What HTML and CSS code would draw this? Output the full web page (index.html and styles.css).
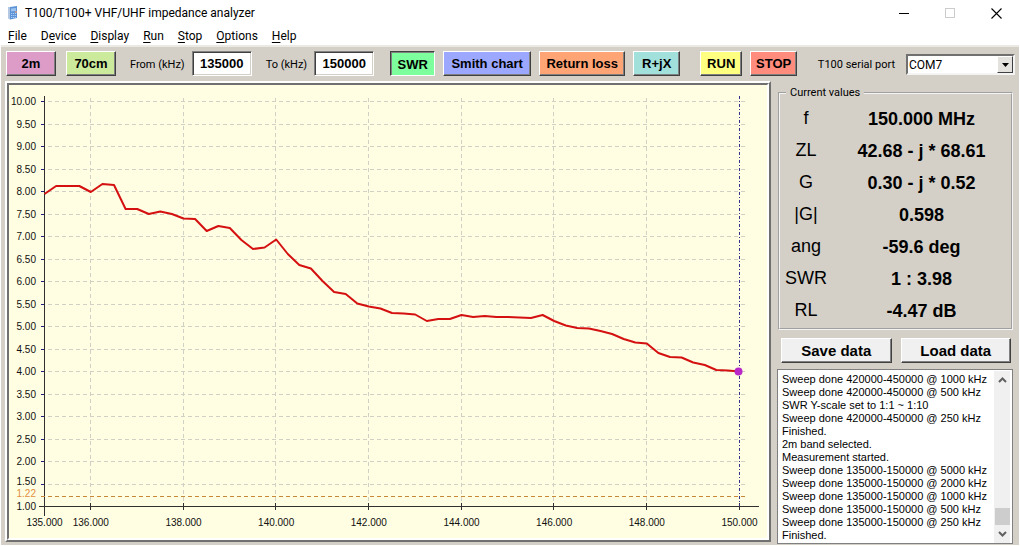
FILE: index.html
```html
<!DOCTYPE html>
<html lang="en">
<head>
<meta charset="utf-8">
<title>T100/T100+ VHF/UHF impedance analyzer</title>
<link rel="stylesheet" href="styles.css">
</head>
<body>
<div class="window">
  <header class="titlebar">
    <svg class="app-icon" viewBox="0 0 12 14" aria-hidden="true">
      <path d="M3 1 L10 0 L10 12 L3 13.5 Z" fill="#5b93d6"/>
      <path d="M1 1 L3 1 L3 13.5 L1 12.5 Z" fill="#b4c8e2"/>
      <path d="M4 2.5L9 2L9 5L4 5.5Z" fill="#9cc4ee"/>
      <path d="M4 7.5h5M4 9.5h5M4 11.5h5" stroke="#a8ccf2" stroke-dasharray="1.2 0.7"/>
      <rect x="8" y="5" width="2" height="2" fill="#b89c94"/>
    </svg>
    <h1 class="title">T100/T100+ VHF/UHF impedance analyzer</h1>
    <div class="controls">
      <button type="button" class="control" aria-label="Minimize"><svg viewBox="0 0 11 11"><path d="M0 5.5h10" stroke="#000"/></svg></button>
      <button type="button" class="control" aria-label="Maximize" disabled><svg viewBox="0 0 11 11"><rect x="0.5" y="0.5" width="9" height="9" fill="none" stroke="#ccc"/></svg></button>
      <button type="button" class="control" aria-label="Close"><svg viewBox="0 0 11 11"><path d="M0.5 0.5l10 10M10.5 0.5l-10 10" stroke="#000" stroke-width="1.1"/></svg></button>
    </div>
  </header>
  <nav class="menu">
    <button type="button" class="menu-item"><u>F</u>ile</button>
    <button type="button" class="menu-item">D<u>e</u>vice</button>
    <button type="button" class="menu-item"><u>D</u>isplay</button>
    <button type="button" class="menu-item"><u>R</u>un</button>
    <button type="button" class="menu-item"><u>S</u>top</button>
    <button type="button" class="menu-item"><u>O</u>ptions</button>
    <button type="button" class="menu-item"><u>H</u>elp</button>
  </nav>
  <div class="client">
    <div class="toolbar">
      <div class="group bands">
        <button type="button" class="btn pink">2m</button>
        <button type="button" class="btn lime">70cm</button>
      </div>
      <div class="group range">
        <label for="from">From (kHz)</label>
        <input id="from" class="field" type="text" value="135000">
      </div>
      <div class="group range">
        <label for="to">To (kHz)</label>
        <input id="to" class="field" type="text" value="150000">
      </div>
      <div class="group views">
        <button type="button" class="btn green pressed" aria-pressed="true">SWR</button>
        <button type="button" class="btn blue">Smith chart</button>
        <button type="button" class="btn orange">Return loss</button>
        <button type="button" class="btn teal">R+jX</button>
      </div>
      <div class="group actions">
        <button type="button" class="btn yellow">RUN</button>
        <button type="button" class="btn red">STOP</button>
      </div>
      <div class="group port">
        <label for="port">T100 serial port</label>
        <div class="combo">
          <select id="port"><option>COM7</option></select>
          <span class="combo-arrow"><svg viewBox="0 0 7 4"><path d="M0 0h7L3.5 4z"/></svg></span>
        </div>
      </div>
    </div>
    <main class="content">
      <div class="chart-frame">
        <div class="chart-well">
          <svg class="chart" id="chart" viewBox="0 0 758 453" role="img" aria-label="SWR against frequency"></svg>
        </div>
      </div>
      <aside class="side">
        <fieldset class="values">
          <legend>Current values</legend>
          <dl class="readings">
            <dt>f</dt><dd>150.000 MHz</dd>
            <dt>ZL</dt><dd>42.68 - j * 68.61</dd>
            <dt>G</dt><dd>0.30 - j * 0.52</dd>
            <dt>|G|</dt><dd>0.598</dd>
            <dt>ang</dt><dd>-59.6 deg</dd>
            <dt>SWR</dt><dd>1 : 3.98</dd>
            <dt>RL</dt><dd>-4.47 dB</dd>
          </dl>
        </fieldset>
        <div class="data-buttons">
          <button type="button" class="btn plain">Save data</button>
          <button type="button" class="btn plain">Load data</button>
        </div>
        <div class="log">
          <textarea class="log-text" readonly aria-label="Log">Sweep done 420000-450000 @ 1000 kHz
Sweep done 420000-450000 @ 500 kHz
SWR Y-scale set to 1:1 ~ 1:10
Sweep done 420000-450000 @ 250 kHz
Finished.
2m band selected.
Measurement started.
Sweep done 135000-150000 @ 5000 kHz
Sweep done 135000-150000 @ 2000 kHz
Sweep done 135000-150000 @ 1000 kHz
Sweep done 135000-150000 @ 500 kHz
Sweep done 135000-150000 @ 250 kHz
Finished.</textarea>
          <div class="scrollbar" aria-hidden="true">
            <svg class="arrow" viewBox="0 0 9 6"><path d="M1 5l3.5-3.5L8 5"/></svg>
            <span class="thumb"></span>
            <svg class="arrow" viewBox="0 0 9 6"><path d="M1 1l3.5 3.5L8 1"/></svg>
          </div>
        </div>
      </aside>
    </main>
  </div>
</div>
<script src="chart.js"></script>
</body>
</html>
```
FILE: chart.js
```js
const NS = 'http://www.w3.org/2000/svg';
const chart = document.getElementById('chart');
const left = 35.5, right = 730.5, top10 = 16.5, bottom = 421.5;

const snap = v => Math.floor(v) + 0.5;
const xAt = mhz => left + (mhz - 135) * (right - left) / 15;
const yAt = swr => bottom - (swr - 1) * (bottom - top10) / 9;

function add(name, attrs, text) {
  const el = document.createElementNS(NS, name);
  for (const key in attrs) el.setAttribute(key, attrs[key]);
  if (text) el.textContent = text;
  chart.appendChild(el);
}
function line(cls, x1, y1, x2, y2) {
  add('line', { class: cls, x1, y1, x2, y2 });
}

for (let swr = 10; swr >= 1; swr -= 0.5) {
  const y = snap(yAt(swr));
  if (swr > 1) {
    line('grid', 39, y, 738, y);
    line('tick', 32, y, 35, y);
  }
  const labelY = swr === 1.5 ? y : y + 3;
  add('text', { class: 'label end', x: 27, y: labelY }, swr.toFixed(2));
}

for (const mhz of [135, 136, 138, 140, 142, 144, 146, 148, 150]) {
  const x = Math.floor(xAt(mhz) - 0.3) + 0.5;
  if (mhz > 135) {
    if (mhz < 150) line('grid', x, 13, x, 421);
    line('axis', x, 418, x, 425);
  }
  add('text', { class: 'label mid', x: xAt(mhz), y: 441 }, mhz.toFixed(3));
}

line('axis', 35.5, 11, 35.5, 431);
line('axis', 30, 421.5, 750, 421.5);
line('best', 32, 411.5, 738, 411.5);
add('text', { class: 'label end best-label', x: 27, y: 412 }, '1.22');
line('cursor', right, 11, right, 421);

// Sweep result, one sample for each 250 kHz, as plot heights.
const samples = [
  109, 101, 101, 101, 107, 99, 100, 124, 124, 129, 126.5, 129, 133.5, 134,
  146, 141, 143, 155, 164, 162.5, 154.5, 169, 180, 183.5, 196, 207, 209,
  218.5, 221.5, 223.5, 228, 228.5, 229.5, 236, 234, 234, 230, 232, 231, 232,
  232, 232.5, 233, 230, 236, 240.5, 243, 243.5, 246, 249, 254, 257.5, 258.5,
  268, 272, 272.5, 277.5, 280, 285, 285.5, 286.5
];
add('polyline', {
  class: 'curve',
  points: samples.map((y, i) => `${xAt(135 + i / 4).toFixed(1)},${y}`).join(' ')
});
add('circle', { class: 'marker', cx: right - 1, cy: 286.5, r: 4 });
```
FILE: styles.css
```css
* { box-sizing: border-box; }

body {
  margin: 0;
  background: #fff;
  color: #000;
  font: 12px/16px Roboto, "Open Sans", sans-serif;
}

button, input, select, textarea { font: inherit; color: inherit; margin: 0; }

.window {
  display: flex;
  flex-direction: column;
  min-height: 100vh;
  padding: 0 1px 1px;
}

.titlebar {
  display: flex;
  align-items: center;
  height: 26px;
  padding-left: 6px;
}
.app-icon { width: 12px; height: 14px; }
.title {
  flex: 1;
  margin: 0 0 0 6px;
  font-size: 12px;
  font-weight: 400;
}
.controls { display: flex; }
.control {
  display: grid;
  place-items: center;
  width: 46px;
  height: 26px;
  padding: 0;
  border: 0;
  background: none;
}
.control svg { width: 11px; height: 11px; }

.menu {
  display: flex;
  gap: 14px;
  height: 19px;
  padding-left: 7px;
}
.menu-item {
  padding: 1px 0 0;
  border: 0;
  background: none;
  line-height: 18px;
}
.menu-item u { text-underline-offset: 2px; }

.client {
  display: flex;
  flex-direction: column;
  flex: 1;
  background: #d4d0c8;
  border-top: 2px solid #ebe9e4;
}

.toolbar {
  display: flex;
  align-items: center;
  height: 34px;
  padding: 0 4px 1px 5px;
}
.group { display: flex; align-items: center; }
.bands { gap: 10px; }
.range { gap: 7px; margin-left: 14px; }
.views { gap: 8px; margin-left: 16px; }
.actions { gap: 8px; margin-left: 20px; }
.port { gap: 11px; margin-left: auto; }
.toolbar label { font-size: 11px; white-space: nowrap; padding-top: 2px; }

.btn {
  height: 25px;
  padding: 0;
  border: 1px solid;
  border-color: #fff #404040 #404040 #fff;
  box-shadow: inset -1px -1px #808080;
  font: bold 13px/20px "Liberation Sans", Arial, sans-serif;
  white-space: nowrap;
}
.pink { width: 50px; background: #dd9cc8; }
.lime { width: 50px; background: #ccea9c; }
.green { width: 45px; background: #7cff9c; }
.blue { width: 88px; background: #9ca8ff; }
.orange { width: 86px; background: #ffa474; }
.teal { width: 47px; background: #a2e0dc; }
.yellow { width: 42px; background: #ffff80; }
.red { width: 47px; background: #ff8c7c; }
.pressed {
  border-color: #404040 #fff #fff #404040;
  box-shadow: inset 1px 1px #808080;
  padding-top: 2px;
}

.field {
  width: 60px;
  height: 25px;
  padding: 0;
  border: 1px solid;
  border-color: #808080 #fff #fff #808080;
  box-shadow: inset 1px 1px #404040, inset -1px -1px #d4d0c8;
  background: #fff;
  font: bold 13px/20px "Liberation Sans", Arial, sans-serif;
  text-align: center;
}

.combo {
  position: relative;
  width: 109px;
  height: 21px;
  margin-top: 2px;
}
.combo select {
  width: 100%;
  height: 100%;
  padding: 0 0 0 1px;
  appearance: none;
  border: 2px solid;
  border-color: #707070 #f4f4f4 #f4f4f4 #707070;
  border-radius: 0;
  background: #fff;
}
.combo-arrow {
  position: absolute;
  top: 2px;
  right: 2px;
  bottom: 2px;
  display: grid;
  place-items: center;
  width: 16px;
  border: 1px solid;
  border-color: #fff #404040 #404040 #fff;
  background: #e4e2de;
  pointer-events: none;
}
.combo-arrow svg { width: 7px; height: 4px; }

.content {
  display: grid;
  grid-template-columns: minmax(0, 1fr) 236px;
  gap: 6px;
  flex: 1;
  padding: 0 6px 1px 4px;
}

.chart-frame {
  align-self: start;
  border: 2px solid;
  border-color: #fff #707070 #707070 #fff;
}
.chart-well {
  border: 2px solid;
  border-color: #707070 #fff #fff #707070;
}
.chart {
  display: block;
  width: 100%;
  background: #fffee2;
}
.grid { stroke: #d0d0c4; stroke-dasharray: 4 3; }
.tick { stroke: #202080; }
.axis { stroke: #303030; }
.best { stroke: #c88838; stroke-dasharray: 4 3; }
.cursor { stroke: #303090; stroke-dasharray: 3 2 1 2; }
.curve { fill: none; stroke: #d41010; stroke-width: 2; stroke-linejoin: round; }
.marker { fill: #b828c8; }
.label { font: 10px "Liberation Sans", Arial, sans-serif; fill: #101010; }
.end { text-anchor: end; }
.mid { text-anchor: middle; }
.best-label { fill: #e09040; }

.side {
  display: flex;
  flex-direction: column;
  padding-top: 4px;
}
.values {
  margin: 0 0 0 1px;
  padding: 2px 0 1px;
  border: 2px groove #f4f4f4;
}
.values legend {
  margin-left: 6px;
  padding: 0 4px;
  font-size: 11px;
  line-height: 16px;
}
.readings {
  display: grid;
  grid-template-columns: 52px 1fr;
  margin: 0;
  text-align: center;
  font: 18px/32px "Liberation Sans", Arial, sans-serif;
}
.readings dt { line-height: 30px; }
.readings dd { margin: 0; font-weight: 700; }

.data-buttons {
  display: grid;
  grid-template-columns: 1fr 1fr;
  gap: 9px;
  margin: 8px 2px 6px 4px;
}
.plain { background: #f0f0f0; font-size: 15px; }

.log {
  display: flex;
  flex: 1;
  border: 1px solid;
  border-color: #707070 #fff #fff #707070;
  outline: 1px solid #808080;
  outline-offset: -1px;
  padding: 1px 2px 0;
  background: #fff;
}
.log-text {
  flex: 1;
  min-width: 0;
  min-height: 171px;
  padding: 2px 0 0 2px;
  border: 0;
  resize: none;
  overflow: hidden;
  white-space: pre;
  background: #fff;
  font: 11px/13px "Liberation Sans", Arial, sans-serif;
}
.scrollbar {
  display: flex;
  flex-direction: column;
  align-items: center;
  width: 16px;
  padding: 6px 0;
  background: #f0f0f0;
}
.arrow { width: 9px; height: 6px; fill: none; stroke: #606060; stroke-width: 2; }
.thumb {
  width: 15px;
  height: 17px;
  margin: auto 0 6px;
  background: #cdcdcd;
}
```
